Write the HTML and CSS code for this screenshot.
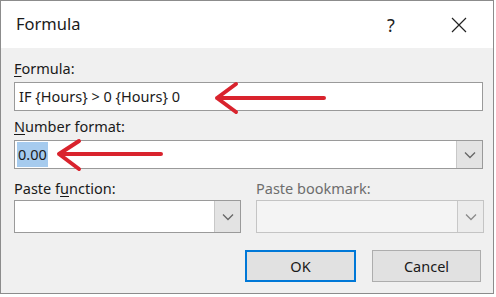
FILE: index.html
```html
<!DOCTYPE html>
<html lang="en">
<head>
    <meta charset="UTF-8">
    <meta name="viewport" content="width=device-width, initial-scale=1.0">
    <title>Formula</title>
    <link rel="stylesheet" href="styles.css">
</head>
<body>
    <div class="dialog">
        <div class="titlebar">
            <div class="title">Formula</div>
            <div class="help">?</div>
            <svg class="close" width="16" height="16" viewBox="0 0 16 16">
                <path d="M1 1 L15 15 M15 1 L1 15" stroke="#222" stroke-width="1.2" fill="none"/>
            </svg>
        </div>

        <div class="content">
            <div class="label label-first"><u>F</u>ormula:</div>
            <div class="field">IF {Hours} &gt; 0 {Hours} 0</div>

            <div class="label"><u>N</u>umber format:</div>
            <div class="combo">
                <div class="combo-text"><span class="selected">0.00</span></div>
                <div class="drop">
                    <svg width="12" height="8" viewBox="0 0 12 8"><path d="M1 1.5 L6 6.5 L11 1.5" stroke="#666" stroke-width="1.3" fill="none"/></svg>
                </div>
            </div>

            <div class="columns">
                <div class="column">
                    <div class="label">Paste f<u>u</u>nction:</div>
                    <div class="combo tall">
                        <div class="combo-text"></div>
                        <div class="drop">
                            <svg width="12" height="8" viewBox="0 0 12 8"><path d="M1 1.5 L6 6.5 L11 1.5" stroke="#666" stroke-width="1.3" fill="none"/></svg>
                        </div>
                    </div>
                </div>
                <div class="column">
                    <div class="label disabled">Paste bookmark:</div>
                    <div class="combo tall off">
                        <div class="combo-text"></div>
                        <div class="drop">
                            <svg width="12" height="8" viewBox="0 0 12 8"><path d="M1 1.5 L6 6.5 L11 1.5" stroke="#8a8a8a" stroke-width="1.3" fill="none"/></svg>
                        </div>
                    </div>
                </div>
            </div>

            <div class="buttons">
                <div class="btn btn-default">OK</div>
                <div class="btn">Cancel</div>
            </div>
        </div>

        <!-- red annotation arrows -->
        <svg class="arrows" width="494" height="294" viewBox="0 0 494 294">
            <g stroke="#d9232d" stroke-width="4" fill="none" stroke-linecap="round" stroke-linejoin="round">
                <path d="M216 97 L323 97 M235 83 L216 97 L235 111"/>
                <path d="M58 153 L160 153 M78 140 L58 153 L78 168"/>
            </g>
        </svg>
    </div>
</body>
</html>
```

FILE: styles.css
```css
body {
    margin: 0;
    padding: 0;
    background-color: #fff;
    font-family: "Noto Sans", "Open Sans", sans-serif;
    color: #1a1a1a;
}

.dialog {
    position: relative;
    box-sizing: border-box;
    width: 494px;
    height: 294px;
    border: 1px solid #8c8c8c;
    background-color: #f0f0f0;
}

.titlebar {
    display: flex;
    align-items: center;
    height: 47px;
    background-color: #fff;
    padding-left: 15px;
}

.title {
    flex: 1;
    font-size: 16.5px;
    padding-bottom: 2px;
}

.help {
    font-size: 18px;
    width: 10px;
    margin-right: 54px;
    color: #222;
}

.close {
    margin-right: 26px;
}

.content {
    padding: 10px 10px 0 13px;
}

.label {
    font-size: 14.5px;
    line-height: 20px;
    margin-top: 5px;
}

.label-first {
    margin-top: 0;
}

.label u {
    text-decoration-thickness: 1px;
    text-underline-offset: 2px;
}

.disabled {
    color: #6d6d6d;
}

.field {
    box-sizing: border-box;
    height: 29px;
    margin-top: 4px;
    border: 1px solid #9a9a9a;
    background-color: #fff;
    font-size: 14.5px;
    line-height: 27px;
    padding-left: 4px;
}

.combo {
    box-sizing: border-box;
    display: flex;
    height: 29px;
    margin-top: 4px;
    border: 1px solid #9a9a9a;
    background-color: #fff;
}

.combo.tall {
    height: 33px;
    margin-top: 2px;
}

.combo.off {
    border-color: #c4c4c4;
    background-color: #f4f4f4;
}

.combo-text {
    flex: 1;
    font-size: 14.5px;
    line-height: 27px;
    padding-left: 2px;
}

.selected {
    background-color: #a6cbee;
    padding: 2px 1px 3px 1px;
}

.drop {
    display: flex;
    align-items: center;
    justify-content: center;
    width: 25px;
    background-color: #e3e3e3;
    border-left: 1px solid #c8c8c8;
}

.off .drop {
    background-color: #ececec;
}

.columns {
    display: grid;
    grid-template-columns: 227px 228px;
    column-gap: 15px;
    margin-top: 4px;
}

.buttons {
    display: flex;
    justify-content: flex-end;
    gap: 16px;
    margin-top: 17px;
    margin-right: 2px;
}

.btn {
    box-sizing: border-box;
    width: 109px;
    height: 32px;
    border: 1px solid #adadad;
    background-color: #e1e1e1;
    font-size: 14.5px;
    line-height: 30px;
    text-align: center;
}

.btn-default {
    width: 111px;
    border: 2px solid #0078d7;
    line-height: 28px;
}

.arrows {
    position: absolute;
    left: 0;
    top: 0;
    pointer-events: none;
}
```
